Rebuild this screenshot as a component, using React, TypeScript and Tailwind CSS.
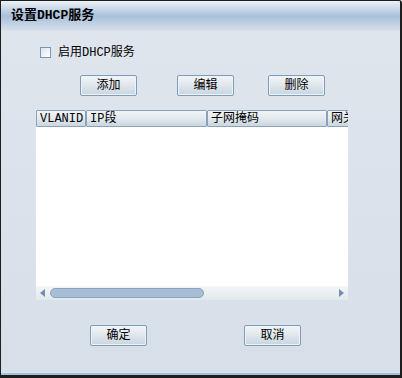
import { ReactNode } from 'react';

const FONT = { fontFamily: '"Liberation Mono","Courier New","Noto Sans CJK SC",monospace' };

function Btn({ children, className = '' }: { children: ReactNode; className?: string }) {
  return (
    <button
      type="button"
      className={`flex h-[21px] w-[57px] shrink-0 items-center justify-center rounded-[2px] border border-[#7f9cb8] bg-gradient-to-b from-[#f3f6f8] via-[#dfe6ec] to-[#c9d5df] text-[12px] leading-none text-black shadow-[inset_0_0_0_1px_#eef3f7] ${className}`}
    >
      {children}
    </button>
  );
}

function HeaderCell({ label, w }: { label: string; w: string }) {
  return (
    <div
      className={`flex h-[17px] shrink-0 items-center overflow-hidden whitespace-nowrap rounded-[1px] border border-[#8aa3ba] bg-gradient-to-b from-[#f2f5f7] via-[#e3e9ee] to-[#cbd6df] pl-[3px] text-[12px] leading-none text-black ${w}`}
    >
      {label}
    </div>
  );
}

export default function App() {
  return (
    <div
      className="flex h-[378px] w-[402px] flex-col overflow-hidden rounded-tr-[3px] border-t border-l border-r-2 border-b-[3px] border-[#1e1e1e] bg-[#dce3eb] text-black"
      style={FONT}
    >
      <div className="flex h-[30px] shrink-0 items-center bg-gradient-to-b from-[#eef2f7] via-[#a8c0da] to-[#d8e1eb] pl-[10px] text-[13px] font-bold">
        设置DHCP服务
      </div>

      <div className="flex flex-1 flex-col border-b-2 border-[#a9c0d9] bg-gradient-to-b from-[#dfe5ed] to-[#d7dfe9]">
        <div className="ml-[39px] mt-[15px] flex h-[13px] items-center gap-[7px]">
          <span className="h-[11px] w-[11px] border border-[#7c97b3] bg-gradient-to-br from-[#dde4eb] to-[#ffffff]" />
          <span className="text-[12px] leading-none">启用DHCP服务</span>
        </div>

        <div className="ml-[79px] mt-[16px] flex">
          <Btn>添加</Btn>
          <Btn className="ml-[40px]">编辑</Btn>
          <Btn className="ml-[34px]">删除</Btn>
        </div>

        <div className="ml-[35px] mt-[14px] flex h-[190px] w-[312px] flex-col overflow-hidden bg-white">
          <div className="flex">
            <HeaderCell label="VLANID" w="w-[50px]" />
            <HeaderCell label="IP段" w="w-[121px]" />
            <HeaderCell label="子网掩码" w="w-[120px]" />
            <HeaderCell label="网关" w="w-[120px]" />
          </div>
          <div className="flex-1" />
          <div className="flex h-[14px] items-center bg-gradient-to-b from-[#f5f7f8] to-[#e2e8eb] px-[4px]">
            <svg width="5" height="8" viewBox="0 0 5 8" className="shrink-0">
              <path d="M5 0 L0 4 L5 8 Z" fill="#6f90b2" />
            </svg>
            <div className="ml-[5px] h-[10px] w-[154px] rounded-full border border-[#86a3c1] bg-[#a9bed5]" />
            <div className="flex-1" />
            <svg width="5" height="8" viewBox="0 0 5 8" className="shrink-0">
              <path d="M0 0 L5 4 L0 8 Z" fill="#6f90b2" />
            </svg>
          </div>
        </div>

        <div className="ml-[89px] mt-[25px] flex">
          <Btn>确定</Btn>
          <Btn className="ml-[97px]">取消</Btn>
        </div>
      </div>
    </div>
  );
}
